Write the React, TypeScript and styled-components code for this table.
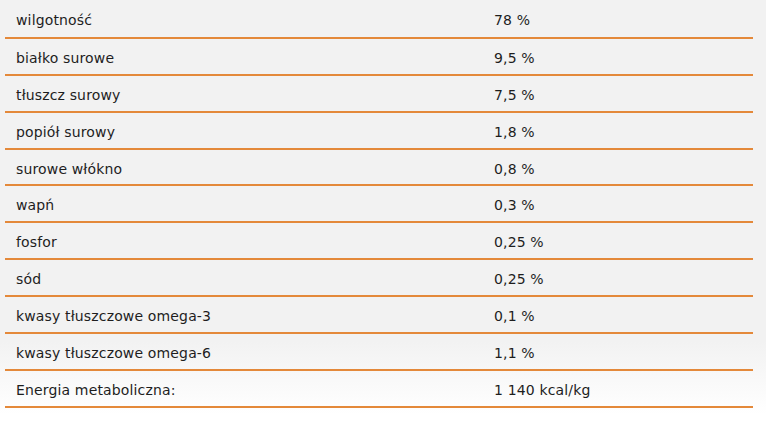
import React from 'react';
import styled, { createGlobalStyle } from 'styled-components';

const GlobalStyle = createGlobalStyle`
  html, body {
    margin: 0;
    padding: 0;
  }
  body {
    width: 766px;
    height: 427px;
    overflow: hidden;
    background: linear-gradient(to bottom, #f2f2f2 0%, #f2f2f2 80%, #ffffff 97%);
    font-family: "DejaVu Sans", Verdana, sans-serif;
  }
`;

const Wrapper = styled.div`
  padding: 1px 13px 0 5px;
`;

const Table = styled.table`
  width: 748px;
  border-collapse: collapse;
  table-layout: fixed;
`;

const Row = styled.tr`
  height: 36.9px;
  border-bottom: 2px solid #e4893a;
`;

const Cell = styled.td<{ $wide?: boolean }>`
  width: ${p => (p.$wide ? '456px' : 'auto')};
  padding: 3px 11px 0;
  font-size: 14px;
  color: #1e1e1e;
  letter-spacing: 0.15px;
  vertical-align: middle;
  white-space: nowrap;
`;

const rows: [string, string][] = [
  ['wilgotność', '78 %'],
  ['białko surowe', '9,5 %'],
  ['tłuszcz surowy', '7,5 %'],
  ['popiół surowy', '1,8 %'],
  ['surowe włókno', '0,8 %'],
  ['wapń', '0,3 %'],
  ['fosfor', '0,25 %'],
  ['sód', '0,25 %'],
  ['kwasy tłuszczowe omega-3', '0,1 %'],
  ['kwasy tłuszczowe omega-6', '1,1 %'],
  ['Energia metaboliczna:', '1 140 kcal/kg'],
];

export default function App() {
  return (
    <>
      <GlobalStyle />
      <Wrapper>
        <Table>
          <tbody>
            {rows.map(([name, value]) => (
              <Row key={name}>
                <Cell $wide>{name}</Cell>
                <Cell>{value}</Cell>
              </Row>
            ))}
          </tbody>
        </Table>
      </Wrapper>
    </>
  );
}
